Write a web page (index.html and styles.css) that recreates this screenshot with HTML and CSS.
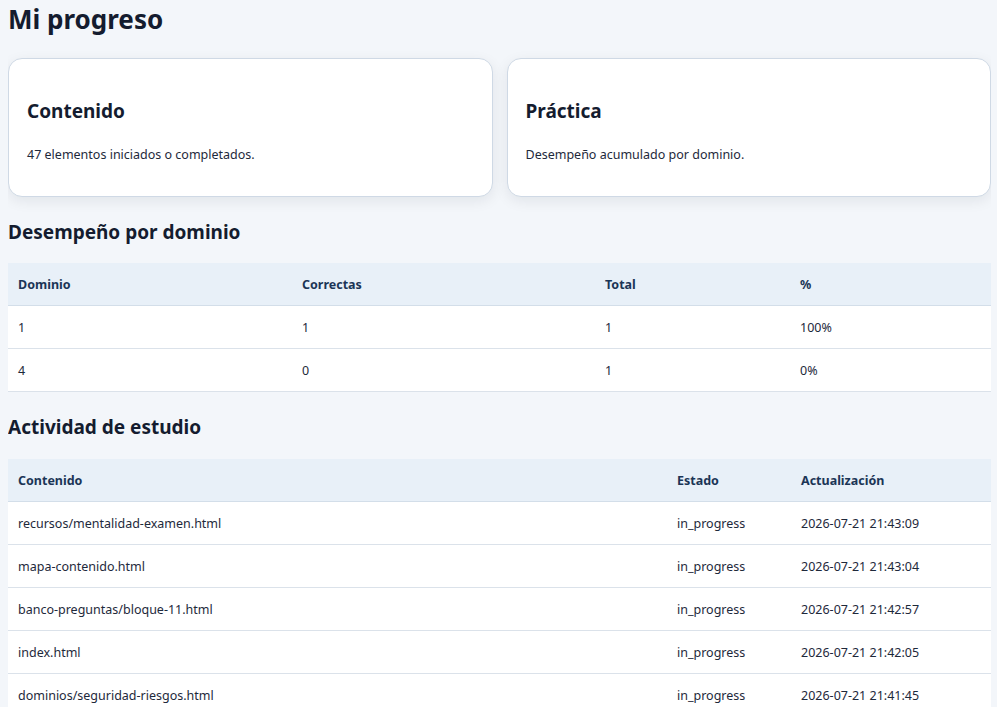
FILE: index.html
```html
<!DOCTYPE html>
<html lang="es">
<head>
    <meta charset="utf-8">
    <title>Mi progreso</title>
    <link rel="stylesheet" href="styles.css">
</head>
<body>
    <h1>Mi progreso</h1>

    <div class="cards">
        <section class="card">
            <h3>Contenido</h3>
            <p>47 elementos iniciados o completados.</p>
        </section>
        <section class="card">
            <h3>Práctica</h3>
            <p>Desempeño acumulado por dominio.</p>
        </section>
    </div>

    <h2>Desempeño por dominio</h2>
    <table class="data">
        <colgroup>
            <col style="width: 284px">
            <col style="width: 303px">
            <col style="width: 195px">
            <col>
        </colgroup>
        <thead>
            <tr><th>Dominio</th><th>Correctas</th><th>Total</th><th>%</th></tr>
        </thead>
        <tbody>
            <tr><td>1</td><td>1</td><td>1</td><td>100%</td></tr>
            <tr><td>4</td><td>0</td><td>1</td><td>0%</td></tr>
        </tbody>
    </table>

    <h2>Actividad de estudio</h2>
    <table class="data">
        <colgroup>
            <col>
            <col style="width: 124px">
            <col style="width: 200px">
        </colgroup>
        <thead>
            <tr><th>Contenido</th><th>Estado</th><th>Actualización</th></tr>
        </thead>
        <tbody>
            <tr><td>recursos/mentalidad-examen.html</td><td>in_progress</td><td>2026-07-21 21:43:09</td></tr>
            <tr><td>mapa-contenido.html</td><td>in_progress</td><td>2026-07-21 21:43:04</td></tr>
            <tr><td>banco-preguntas/bloque-11.html</td><td>in_progress</td><td>2026-07-21 21:42:57</td></tr>
            <tr><td>index.html</td><td>in_progress</td><td>2026-07-21 21:42:05</td></tr>
            <tr><td>dominios/seguridad-riesgos.html</td><td>in_progress</td><td>2026-07-21 21:41:45</td></tr>
        </tbody>
    </table>
</body>
</html>
```

FILE: styles.css
```css
body {
    font-family: "Segoe UI", "Noto Sans", sans-serif;
    margin: 0 6px 0 8px;
    background-color: #f3f6fa;
    color: #1e293b;
    font-size: 12.5px;
}
h1 {
    font-size: 26px;
    line-height: 34px;
    margin: 2px 0 22px;
    color: #141c2f;
}
h2 {
    font-size: 19px;
    line-height: 24px;
    margin: 23px 0 20px;
    color: #141c2f;
}
.cards {
    display: grid;
    grid-template-columns: 1fr 1fr;
    gap: 14px;
    margin-bottom: 23px;
}
.cards + h2 {
    margin-top: 0;
    margin-bottom: 19px;
}
.card {
    background-color: white;
    border: 1px solid #cfd9e5;
    border-radius: 14px;
    box-shadow: 0 4px 14px rgba(15, 23, 42, 0.08);
    padding: 40px 18px 32px;
}
.card h3 {
    font-size: 19px;
    line-height: 24px;
    margin: 0 0 23px;
    color: #141c2f;
}
.card p {
    margin: 0;
    line-height: 18px;
}
.data {
    width: 100%;
    border-collapse: collapse;
    background-color: white;
    table-layout: fixed;
}
.data th,
.data td {
    text-align: left;
    padding: 13px 10px 11px;
    line-height: 18px;
    border-bottom: 1px solid #dbe2ea;
}
.data th {
    background-color: #e8f0f8;
    color: #1b3556;
    font-weight: bold;
    border-bottom-color: #d3dee9;
}
```
